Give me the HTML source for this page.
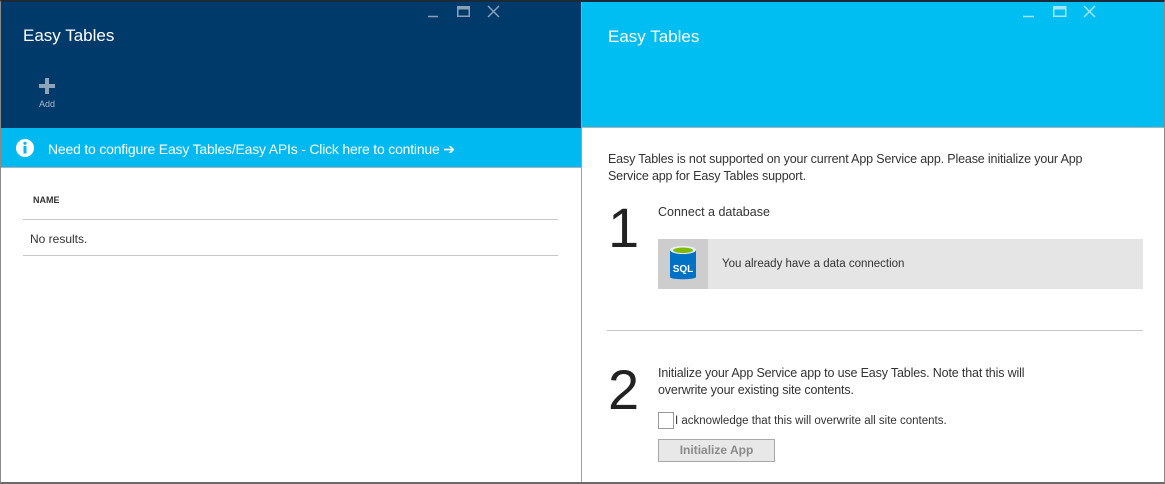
<!DOCTYPE html>
<html><head><style>
*{margin:0;padding:0;box-sizing:border-box}
body{width:1165px;height:484px;overflow:hidden;background:#fff;font-family:"Liberation Sans",sans-serif;position:relative}
.a{position:absolute}
</style></head><body>
<div class="a" style="left:0;top:0;width:1165px;height:484px;border:1px solid #8a8a8a;border-top:2px solid #1a2a3a;border-bottom:2px solid #6a6a6a"></div>
<!-- left -->
<div class="a" style="left:1px;top:2px;height:126px;background:#003a6b;width:580px"></div>
<div class="a" style="left:23px;top:26px;color:#fff;font-size:17px">Easy Tables</div>
<svg class="a" style="left:39px;top:78px" width="16" height="16"><path d="M6 0h4v6h6v4h-6v6H6v-6H0V6h6z" fill="#8ea3ba"/></svg>
<div class="a" style="left:39px;top:99px;color:#a9b9cc;font-size:9px">Add</div>
<svg class="a" style="left:427px;top:5px" width="150" height="14"><g stroke="#8aa0b8" stroke-width="1.5" fill="none"><path d="M1 11.5h10"/><rect x="30.75" y="1.75" width="11.5" height="9.5"/><path d="M30.75 3h11.5" stroke-width="3"/><path d="M61 1l11 11M72 1l-11 11"/></g></svg>
<div class="a" style="left:1px;top:128px;width:580px;height:40px;background:#00b9f0;border-bottom:1px solid #b0b0b0"></div>
<svg class="a" style="left:15px;top:138px" width="20" height="20"><circle cx="10" cy="10" r="9" fill="#fff"/><rect x="8.5" y="8" width="3" height="7.5" fill="#00b9f0"/><circle cx="10" cy="5.3" r="1.6" fill="#00b9f0"/></svg>
<div class="a" style="left:48px;top:141px;color:#fff;font-size:14px;letter-spacing:-0.2px">Need to configure Easy Tables/Easy APIs - Click here to continue ➔</div>
<div class="a" style="left:33px;top:195px;font-size:9px;font-weight:bold;color:#333">NAME</div>
<div class="a" style="left:23px;top:219px;width:535px;border-top:1px solid #c8c8c8"></div>
<div class="a" style="left:30px;top:232px;font-size:12px;color:#333">No results.</div>
<div class="a" style="left:23px;top:255px;width:535px;border-top:1px solid #c8c8c8"></div>
<!-- divider -->
<div class="a" style="left:581px;top:2px;width:1px;height:480px;background:#a0a0a0"></div>
<!-- right -->
<div class="a" style="left:582px;top:2px;width:582px;height:126px;background:#00bdf2;border-bottom:1px solid #b0b0b0"></div>
<div class="a" style="left:608px;top:27px;color:#fff;font-size:17px">Easy Tables</div>
<svg class="a" style="left:1022px;top:5px" width="140" height="14"><g stroke="#a6e4f8" stroke-width="1.5" fill="none"><path d="M1 11.5h11"/><rect x="31.75" y="1.75" width="12" height="9.5"/><path d="M31.75 3h12" stroke-width="3"/><path d="M62 1l11 11M73 1l-11 11"/></g></svg>
<div class="a" style="left:608px;top:151px;font-size:12.5px;color:#333;line-height:17px;width:510px;letter-spacing:-0.15px">Easy Tables is not supported on your current App Service app. Please initialize your App Service app for Easy Tables support.</div>
<div class="a" style="left:608px;top:196px;font-size:56px;color:#222;line-height:64px">1</div>
<div class="a" style="left:658px;top:205px;font-size:12.5px;color:#333">Connect a database</div>
<div class="a" style="left:658px;top:239px;width:485px;height:50px;background:#e5e5e5"></div>
<div class="a" style="left:658px;top:239px;width:50px;height:50px;background:#cdcdcd"></div>
<svg class="a" style="left:669px;top:245px" width="28" height="38"><path d="M1 5v27c0 3 26 3 26 0V5z" fill="#0072c6"/><ellipse cx="14" cy="5" rx="13" ry="4" fill="#e8f0f8"/><ellipse cx="14" cy="5.3" rx="10" ry="2.8" fill="#7fba00"/><text x="14" y="27" font-size="10" font-weight="bold" fill="#fff" text-anchor="middle" font-family="Liberation Sans">SQL</text></svg>
<div class="a" style="left:722px;top:258px;font-size:11.5px;color:#333">You already have a data connection</div>
<div class="a" style="left:607px;top:330px;width:536px;border-top:1px solid #c8c8c8"></div>
<div class="a" style="left:608px;top:358px;font-size:56px;color:#222;line-height:64px">2</div>
<div class="a" style="left:658px;top:365px;font-size:12.5px;color:#333;line-height:17px;width:410px;letter-spacing:-0.15px">Initialize your App Service app to use Easy Tables. Note that this will overwrite your existing site contents.</div>
<div class="a" style="left:658px;top:412px;width:16px;height:17px;border:1px solid #999;background:#fff"></div>
<div class="a" style="left:675px;top:415px;font-size:11.5px;color:#333">I acknowledge that this will overwrite all site contents.</div>
<div class="a" style="left:658px;top:439px;width:117px;height:23px;background:#e8e8e8;border:1px solid #a8a8a8;color:#8a8a8a;font-size:12px;text-align:center;line-height:21px;font-weight:bold">Initialize App</div>
</body></html>
